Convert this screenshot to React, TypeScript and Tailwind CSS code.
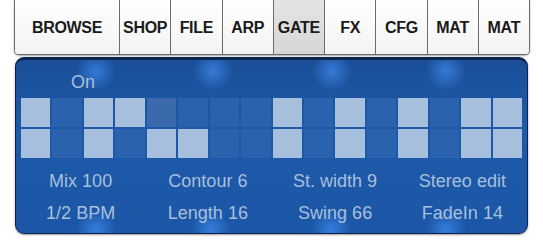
const tabs = ["BROWSE", "SHOP", "FILE", "ARP", "GATE", "FX", "CFG", "MAT", "MAT"];

const rowA = [1, 0, 1, 1, 0, 0, 0, 0, 1, 0, 1, 0, 1, 0, 1, 1];
const rowB = [1, 0, 1, 0, 1, 1, 0, 0, 1, 0, 1, 0, 1, 0, 1, 1];

const params = [
  ["Mix 100", "Contour 6", "St. width 9", "Stereo edit"],
  ["1/2 BPM", "Length 16", "Swing 66", "FadeIn 14"],
];

function Cell({ on, dim }: { on: number; dim?: boolean }) {
  return (
    <div
      className={`h-[29px] ${
        on ? "bg-[#a6bfdc]" : dim ? "bg-[#3a6aac]" : "bg-[#2a62ad]"
      }`}
    />
  );
}

export default function App() {
  return (
    <div className="w-[543px] h-[250px] bg-white font-['Liberation_Sans',Arial,sans-serif] overflow-hidden">
      <div className="ml-[14px] w-[516px] h-[55px] flex bg-white border border-t-0 border-[#6b6b6b] rounded-b-[5px] shadow-[0_1px_2px_rgba(0,0,0,0.35)] overflow-hidden">
        {tabs.map((t, i) => (
          <div
            key={i}
            className={`${i === 0 ? "w-[104px]" : "flex-1"} ${
              i > 0 ? "border-l border-[#6b6b6b]" : ""
            } ${
              t === "GATE"
                ? "bg-gradient-to-b from-[#e4e4e4] to-[#d6d6d6]"
                : "bg-gradient-to-b from-white to-[#f3f3f3]"
            } flex items-center justify-center pt-px text-[16px] font-bold text-[#1a1a1a] tracking-[-0.3px]`}
          >
            {t}
          </div>
        ))}
      </div>

      <div className="ml-[15px] mt-[2px] w-[513px] h-[177px] rounded-[9px] border-t-[3px] border-x border-b border-[#0c2450] bg-[radial-gradient(circle_at_80px_11px,rgba(70,150,255,0.6),transparent_20px),radial-gradient(circle_at_197px_11px,rgba(70,150,255,0.6),transparent_20px),radial-gradient(circle_at_316px_11px,rgba(70,150,255,0.6),transparent_20px),radial-gradient(circle_at_430px_11px,rgba(70,150,255,0.6),transparent_20px),radial-gradient(circle_at_80px_170px,rgba(70,150,255,0.6),transparent_20px),radial-gradient(circle_at_195px_170px,rgba(70,150,255,0.6),transparent_20px),radial-gradient(circle_at_315px_170px,rgba(70,150,255,0.6),transparent_20px),radial-gradient(circle_at_430px_170px,rgba(70,150,255,0.6),transparent_20px),linear-gradient(to_bottom,#1b4f98,#1d5aa9_40%,#1b57a6)] shadow-[0_1px_2px_rgba(0,0,0,0.4)] px-[5px]">
        <div className="h-[38px] pl-[50px] pt-[13px] text-[18px] text-[#a9bfdc] leading-none">
          On
        </div>
        <div className="grid grid-cols-16 gap-[2px]">
          {rowA.map((v, i) => (
            <Cell key={"a" + i} on={v} dim={i === 4} />
          ))}
          {rowB.map((v, i) => (
            <Cell key={"b" + i} on={v} />
          ))}
        </div>
        <div className="-mx-[4px] mt-[13px] flex flex-col gap-[12px]">
          {params.map((row, r) => (
            <div key={r} className="grid grid-cols-4 text-[18px] leading-[20px] text-[#a9bfdc] text-center">
              {row.map((p) => (
                <span key={p}>{p}</span>
              ))}
            </div>
          ))}
        </div>
      </div>
    </div>
  );
}
